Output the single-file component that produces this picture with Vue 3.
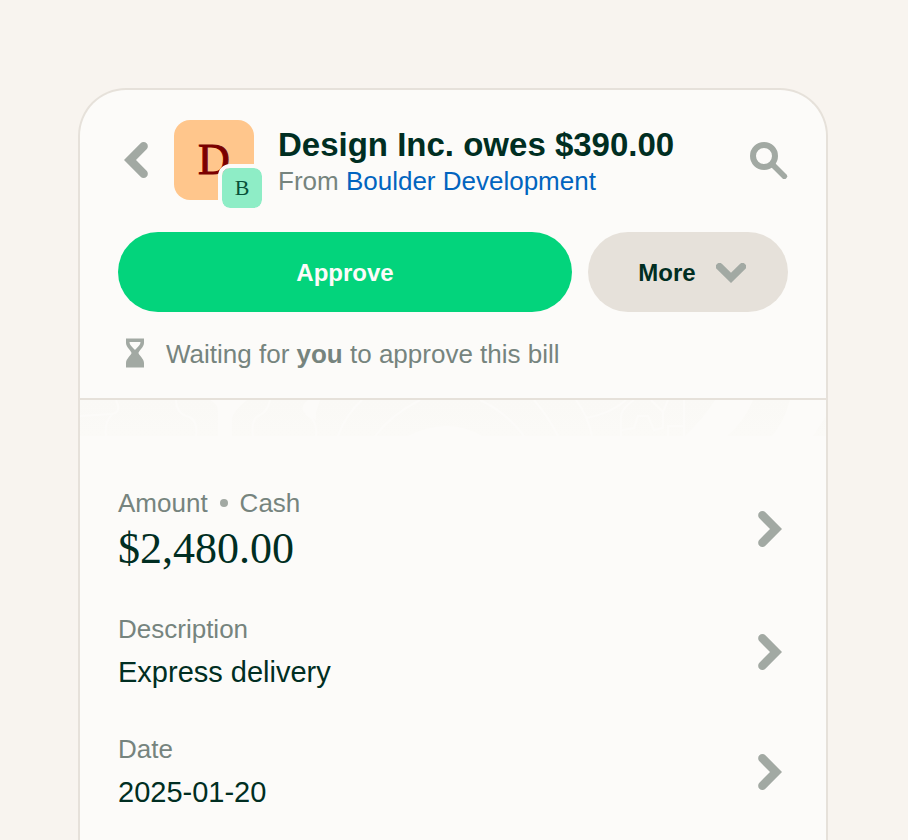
<script setup>
const sender = { name: 'Boulder Development', href: '#boulder-development' }

const fields = [
  { labels: ['Amount', 'Cash'], value: '$2,480.00', large: true },
  { labels: ['Description'], value: 'Express delivery' },
  { labels: ['Date'], value: '2025-01-20' },
]
</script>

<template>
  <div class="page">
    <main class="card">
      <header class="header">
        <div class="title-row">
          <button class="icon-button back" type="button" aria-label="Back">
            <svg width="24" height="36" viewBox="0 0 24 36">
              <path d="M0 18 16.6 1.3a4.2 4.2 0 0 1 6 6L12 18l10.600 10.700a4.200 4.200 0 0 1-6 6z" />
            </svg>
          </button>
          <div class="avatar">
            D
            <span class="sub-avatar">B</span>
          </div>
          <div class="titles">
            <h1>Design Inc. owes $390.00</h1>
            <p>From <a :href="sender.href">{{ sender.name }}</a></p>
          </div>
          <button class="icon-button" type="button" aria-label="Search">
            <svg width="38" height="38" viewBox="0 0 38 38">
              <circle class="stroke" cx="14" cy="15" r="11" stroke-width="6" />
              <path class="stroke" d="M22 23 34.300 35.300" stroke-width="5.600" stroke-linecap="round" />
            </svg>
          </button>
        </div>

        <div class="actions">
          <button class="button approve" type="button">Approve</button>
          <button class="button more" type="button">
            More
            <svg width="30" height="20" viewBox="0 0 30 20">
              <path d="M15 20 1 6.200A3.600 3.600 0 0 1 6.100 1L15 9.800 23.900 1A3.600 3.600 0 0 1 29 6.200z" />
            </svg>
          </button>
        </div>

        <div class="status">
          <svg width="18" height="30" viewBox="0 0 18 30">
            <path
              fill-rule="evenodd"
              d="M0 0.500H18V5C18 9 12.500 13 12.500 15S18 20.500 18 25V29.500H0V25C0 20.500 5.500 17 5.500 15S0 9 0 5zM3.500 4C3.500 7.500 7.600 10 9 12 10.400 10 14.500 7.500 14.500 4z"
            />
          </svg>
          <p>Waiting for <strong>you</strong> to approve this bill</p>
        </div>
      </header>

      <svg class="pattern" viewBox="0 0 746 36" preserveAspectRatio="none" aria-hidden="true">
        <defs>
          <linearGradient id="pattern-fade" x1="0" y1="0" x2="0" y2="1">
            <stop offset="0" stop-color="#faf9f6" />
            <stop offset="1" stop-color="#fbfaf7" />
          </linearGradient>
        </defs>
        <path
          fill="url(#pattern-fade)"
          d="M0 0H130Q139 4 138 14V36H0zM152 36V20Q152 12 167 0H228Q218 8 226 14L236 20V12L240 0H635Q624 18 605 36H402Q368 16 328 36zM647 36Q664 22 673 0H710Q704 22 692 36zM733 36 746 16V36z"
        />
        <g class="lines">
          <path d="M36 0Q42 12 32 14L0 16M32 15Q24 22 26 36M96 0Q96 12 106 16Q118 18 116 36M190 0Q188 12 178 16Q171 20 173 36M226 14Q238 20 236 36" />
          <path d="M258 36Q266 14 282 0M295 36Q312 14 340 0M400 0Q426 12 444 36M454 0Q468 16 478 36M496 0Q508 16 512 36M506 18Q530 14 546 0M541 36V16Q542 8 554 0M571 0 583 12V28L574 30 568 16H558L554 28 542 30M604 0V36M588 36V26H604M583 12 588 0" />
        </g>
      </svg>

      <div class="fields">
        <button v-for="field in fields" :key="field.value" class="field" type="button">
          <span class="field-text">
            <span class="label">
              <template v-for="(label, index) in field.labels" :key="label">
                <span v-if="index" class="dot"></span>
                <span>{{ label }}</span>
              </template>
            </span>
            <span class="value" :class="{ large: field.large }">{{ field.value }}</span>
          </span>
          <svg width="24" height="36" viewBox="0 0 24 36">
            <path d="M24 18 7.400 1.300a4.200 4.200 0 0 0-6 6L12 18 1.400 28.700a4.200 4.200 0 0 0 6 6z" />
          </svg>
        </button>
      </div>
    </main>
  </div>
</template>

<style>
body {
  margin: 0;
  background: #f8f4ef;
}
</style>

<style scoped>
* {
  box-sizing: border-box;
}

.page {
  display: flex;
  min-height: 100vh;
  padding: 88px 80px 0 78px;
  color: #002e22;
  font-family: "Liberation Sans", Arial, sans-serif;
  font-size: 26px;
  line-height: 32px;
}

.card {
  flex: 1;
  min-width: 0;
  overflow: hidden;
  background: #fcfbf9;
  border: 2px solid #e6e1da;
  border-bottom: 0;
  border-radius: 48px 48px 0 0;
}

h1,
p {
  margin: 0;
}

button {
  padding: 0;
  border: 0;
  background: none;
  color: inherit;
  font: inherit;
  cursor: pointer;
}

svg {
  display: block;
  flex: none;
  fill: #a2a9a3;
}

.stroke {
  fill: none;
  stroke: #a2a9a3;
}

.header {
  display: flex;
  flex-direction: column;
  padding: 30px 38px 28px;
  border-bottom: 2px solid #e6e1da;
}

.title-row {
  display: flex;
  align-items: center;
}

.back {
  margin: 0 26px 0 6px;
}

.avatar {
  position: relative;
  display: flex;
  align-items: center;
  justify-content: center;
  width: 80px;
  height: 80px;
  border-radius: 16px;
  background: #ffc68c;
  color: #7a0000;
  font-family: "Liberation Serif", serif;
  font-size: 44px;
  -webkit-text-stroke: 1px;
}

.sub-avatar {
  position: absolute;
  right: -12px;
  bottom: -12px;
  display: flex;
  align-items: center;
  justify-content: center;
  width: 48px;
  height: 48px;
  border: 4px solid #fcfbf9;
  border-radius: 12px;
  background: #8eedc6;
  background-clip: padding-box;
  color: #085239;
  font-size: 22px;
  -webkit-text-stroke: 0;
}

.titles {
  flex: 1;
  min-width: 0;
  margin-left: 24px;
  padding-top: 2px;
}

h1 {
  font-size: 33px;
  font-weight: 700;
  line-height: 40px;
}

.titles p,
.status,
.label {
  color: #76847e;
}

a {
  color: #0164bf;
  text-decoration: none;
}

.actions {
  display: flex;
  gap: 16px;
  margin-top: 32px;
}

.button {
  display: flex;
  align-items: center;
  justify-content: center;
  gap: 20px;
  height: 80px;
  padding-top: 2px;
  border-radius: 40px;
  font-size: 24px;
  font-weight: 700;
}

.approve {
  flex: 1;
  background: #03d47c;
  color: #fcfbf9;
}

.more {
  width: 200px;
  padding-left: 8px;
  background: #e6e1da;
}

.status {
  display: flex;
  align-items: center;
  gap: 22px;
  margin-top: 24px;
  padding: 0 8px;
}

.status p {
  padding-top: 2px;
}

.pattern {
  width: 100%;
  height: 36px;
}

.lines {
  fill: none;
  stroke: #fcfbf9;
  stroke-width: 2;
}

.fields {
  display: flex;
  flex-direction: column;
  padding-top: 30px;
}

.field {
  display: flex;
  align-items: center;
  justify-content: space-between;
  padding: 20px 44px 20px 38px;
  text-align: left;
}

.field-text {
  display: flex;
  flex-direction: column;
  gap: 6px;
}

.label {
  display: flex;
  align-items: center;
  gap: 12px;
  line-height: 34px;
}

.dot {
  width: 8px;
  height: 8px;
  border-radius: 50%;
  background: #a2a9a3;
}

.value {
  font-size: 29px;
  line-height: 40px;
}

.large {
  font-family: "Liberation Serif", serif;
  font-size: 44px;
  line-height: 46px;
}
</style>
